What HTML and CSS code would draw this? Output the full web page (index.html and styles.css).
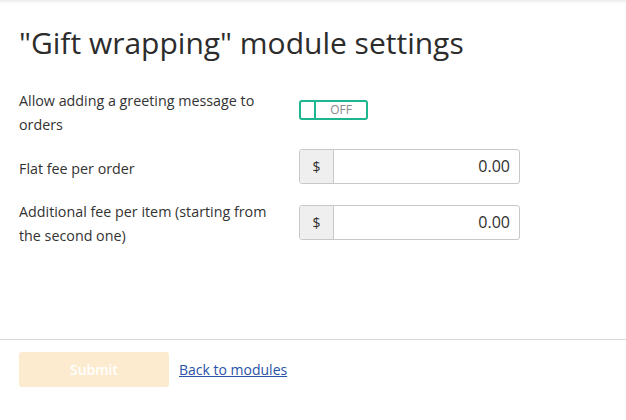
FILE: index.html
```html
<!DOCTYPE html>
<html>
<head>
<meta charset="utf-8">
<link rel="stylesheet" href="styles.css">
</head>
<body>
<div class="page">
  <div class="content">
    <h1 class="title">"Gift wrapping" module settings</h1>
    <div class="form">
      <div class="row row-toggle">
        <div class="label">Allow adding a greeting message to orders</div>
        <div class="control">
          <div class="toggle"><span class="knob"></span><span class="state">OFF</span></div>
        </div>
      </div>
      <div class="row row-input">
        <div class="label">Flat fee per order</div>
        <div class="control">
          <div class="input-group"><span class="addon">$</span><span class="value">0.00</span></div>
        </div>
      </div>
      <div class="row row-input">
        <div class="label">Additional fee per item (starting from the second one)</div>
        <div class="control">
          <div class="input-group"><span class="addon">$</span><span class="value">0.00</span></div>
        </div>
      </div>
    </div>
  </div>
  <div class="footer">
    <button class="submit" type="button">Submit</button>
    <a class="back" href="#">Back to modules</a>
  </div>
</div>
</body>
</html>
```
FILE: styles.css
```css
* { box-sizing: border-box; }
html, body { margin: 0; padding: 0; background: #fff; }
body {
  font-family: "Open Sans", "Liberation Sans", sans-serif;
  color: #333;
  width: 626px;
  height: 420px;
  overflow: hidden;
}
.page {
  height: 420px;
  display: flex;
  flex-direction: column;
  background: linear-gradient(#ececec, #fff 4px);
}
.content {
  padding: 20px 19px 0 19px;
  height: 339px;
}
.title {
  margin: 0;
  font-size: 30px;
  font-weight: 400;
  line-height: 46px;
  color: #2c2c2c;
}
.form {
  margin-top: 23px;
  display: flex;
  flex-direction: column;
}
.row {
  display: flex;
  align-items: flex-start;
}
.label {
  width: 255px;
  margin-right: 25px;
  font-size: 14.3px;
  line-height: 24px;
  color: #333;
}
.row-toggle { height: 60px; }
.row-toggle .control { padding-top: 11px; }
.toggle {
  width: 69px;
  height: 20px;
  border: 2px solid #1fb58f;
  border-radius: 3px;
  display: flex;
  align-items: center;
}
.knob {
  width: 15px;
  height: 100%;
  border-right: 2px solid #1fb58f;
}
.state {
  flex: 1;
  text-align: center;
  font-size: 12px;
  color: #8a8a8a;
  line-height: 16px;
}
.row-input { height: 56px; }
.row-input:last-child { height: auto; }
.input-group {
  width: 221px;
  height: 35px;
  border: 1px solid #c8c8c8;
  border-radius: 3px;
  display: flex;
  overflow: hidden;
}
.addon {
  width: 34px;
  background: #efefef;
  border-right: 1px solid #c8c8c8;
  display: flex;
  align-items: center;
  justify-content: center;
  font-size: 14px;
  color: #333;
}
.value {
  flex: 1;
  text-align: right;
  padding-right: 9px;
  font-size: 16px;
  line-height: 33px;
  color: #2f2f2f;
}
.row-input .label { margin-top: -5px; }
.row-input:nth-child(2) .label { margin-top: 8px; }
.footer {
  border-top: 1px solid #d9d9d9;
  padding: 12px 19px 0 19px;
  display: flex;
  gap: 10px;
  height: 81px;
  align-items: flex-start;
}
.submit {
  width: 150px;
  height: 35px;
  border: none;
  border-radius: 3px;
  background: #fdebcf;
  color: #fff;
  font-family: "Open Sans", "Liberation Sans", sans-serif;
  font-weight: 600;
  font-size: 14px;
}
.back {
  font-size: 14px;
  color: #2a52a8;
  text-decoration: underline;
  line-height: 35px;
}
```
